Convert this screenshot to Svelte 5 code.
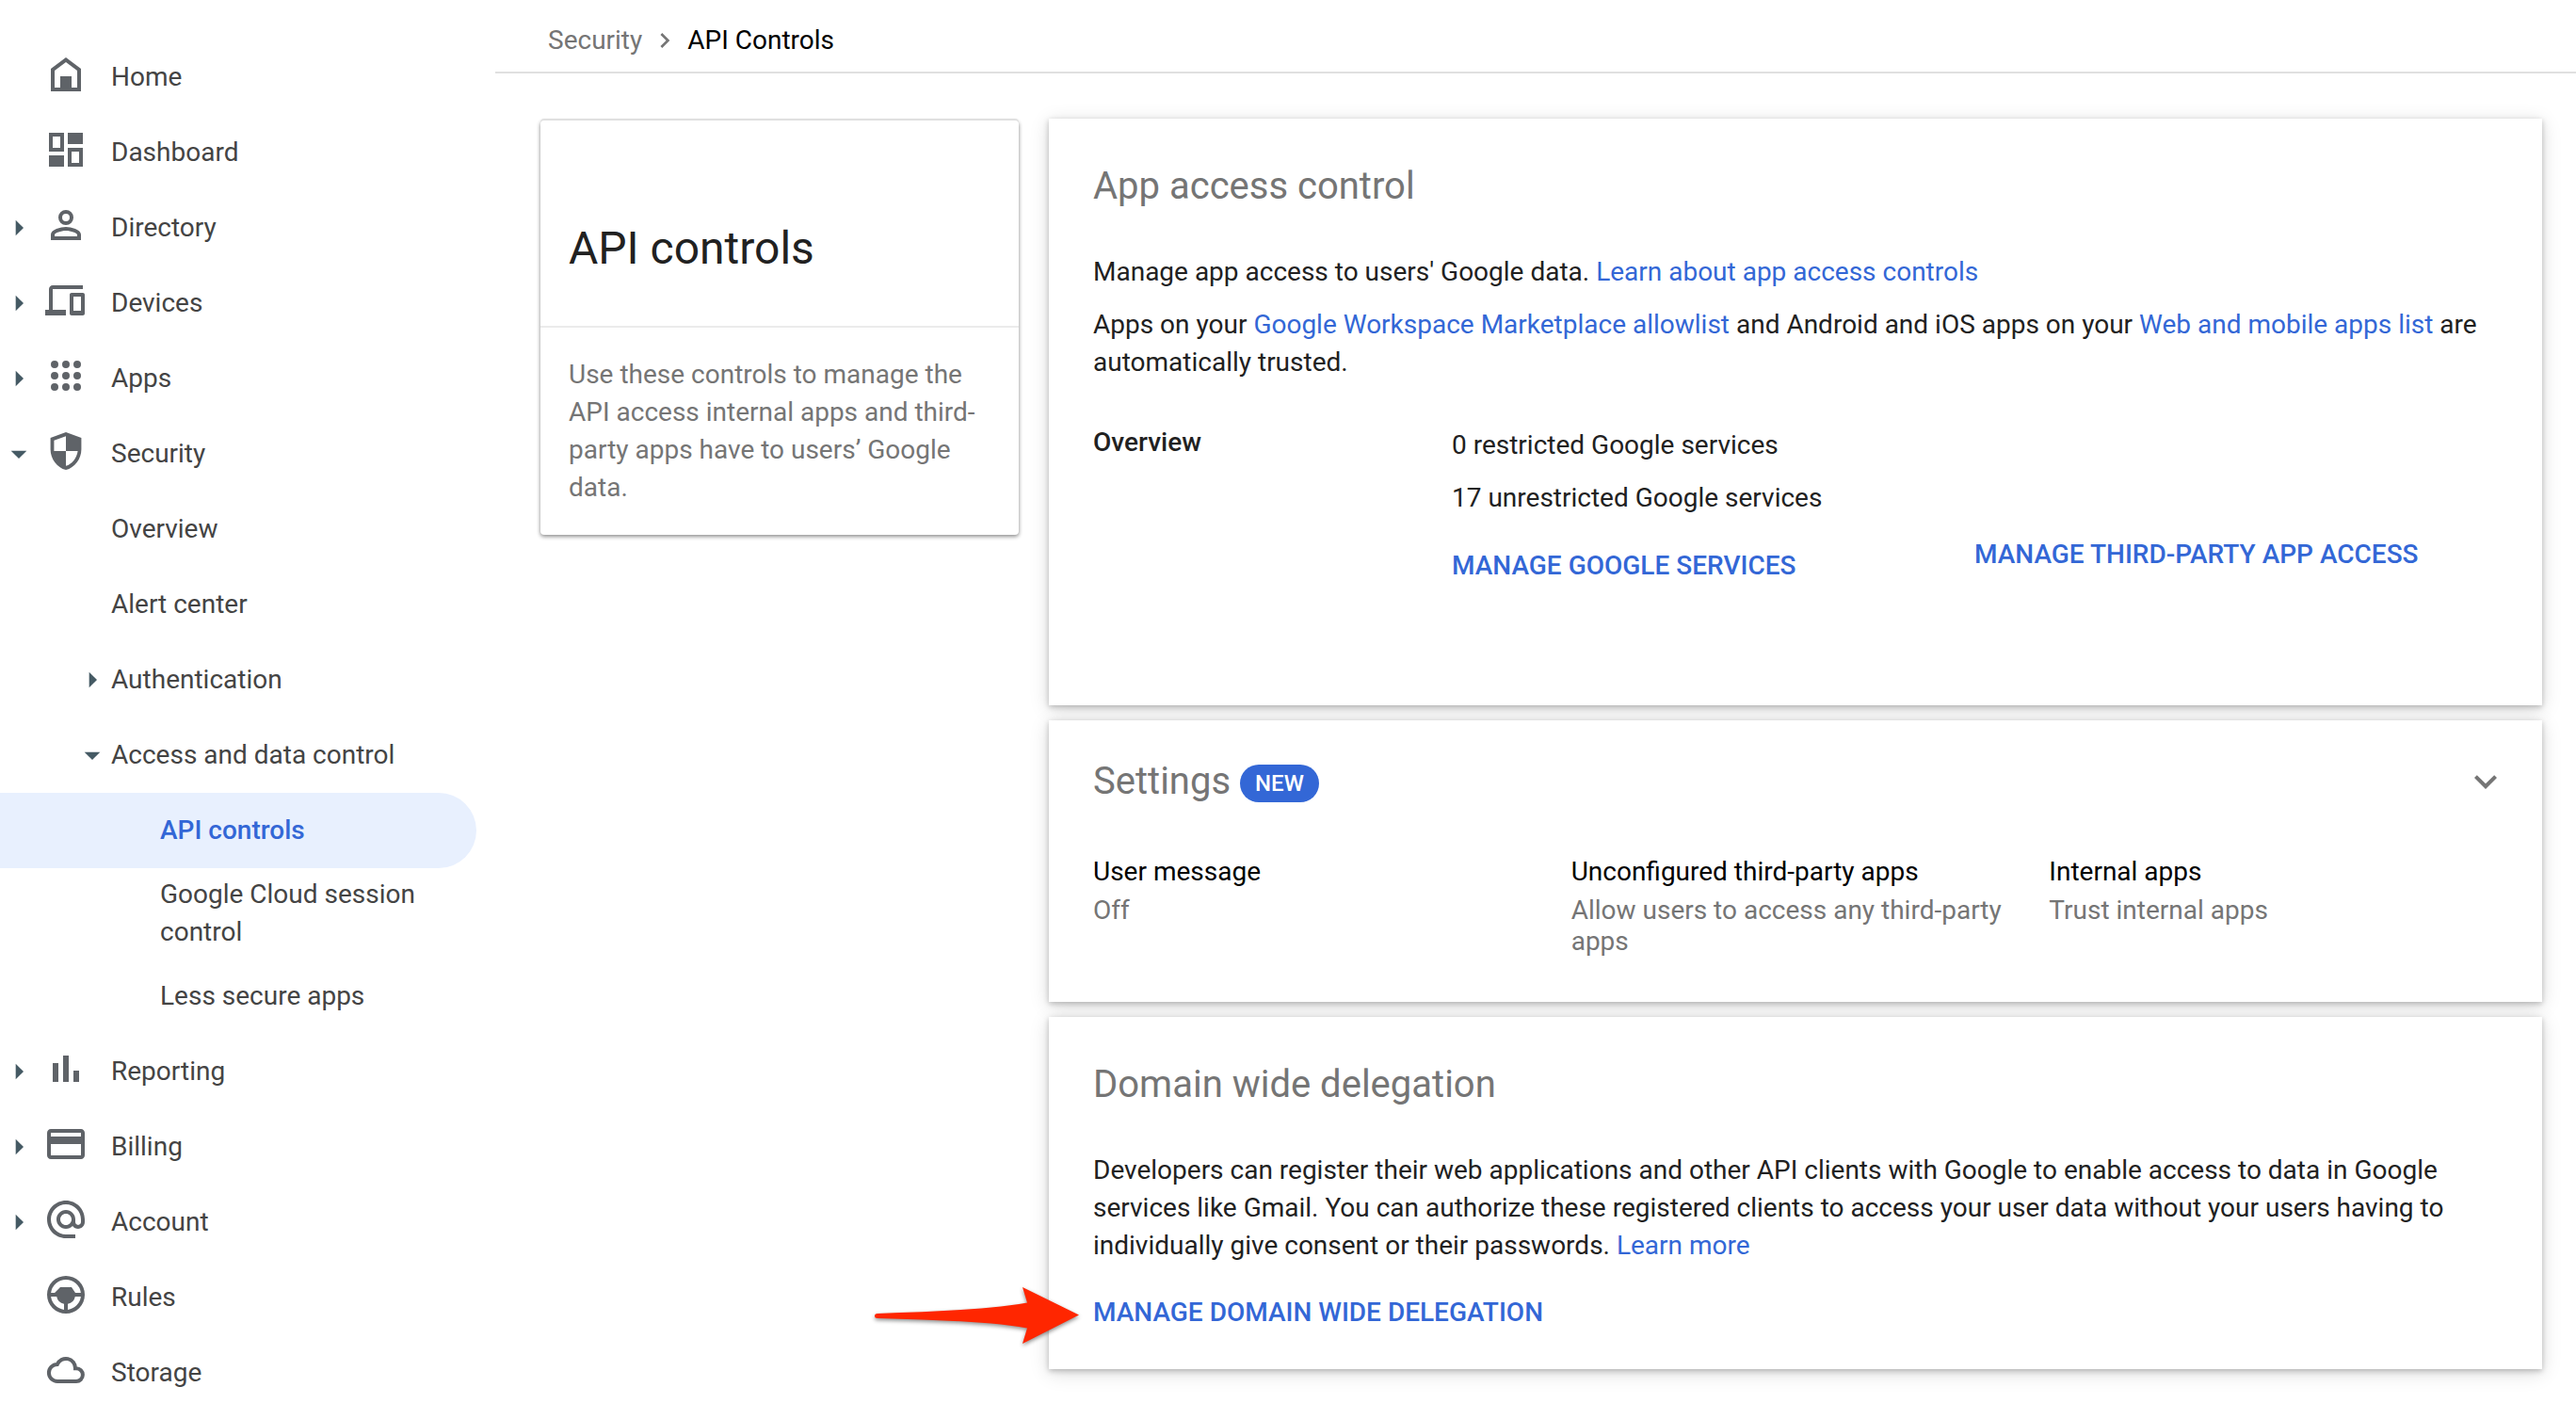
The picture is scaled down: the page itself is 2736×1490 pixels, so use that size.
<script>
  const nav = [
    { label: 'Home', icon: 'home' },
    { label: 'Dashboard', icon: 'dashboard' },
    { label: 'Directory', icon: 'person', state: 'closed' },
    { label: 'Devices', icon: 'devices', state: 'closed' },
    { label: 'Apps', icon: 'apps', state: 'closed' },
    {
      label: 'Security',
      icon: 'shield',
      state: 'open',
      children: [
        { label: 'Overview' },
        { label: 'Alert center' },
        { label: 'Authentication', state: 'closed' },
        {
          label: 'Access and data control',
          state: 'open',
          children: [
            { label: 'API controls', active: true },
            { label: 'Google Cloud session control' },
            { label: 'Less secure apps' }
          ]
        }
      ]
    },
    { label: 'Reporting', icon: 'bars', state: 'closed' },
    { label: 'Billing', icon: 'card', state: 'closed' },
    { label: 'Account', icon: 'at', state: 'closed' },
    { label: 'Rules', icon: 'wheel' },
    { label: 'Storage', icon: 'cloud' }
  ];

  const icons = {
    home: 'M12 3 4 9v12h16V9zM18 19h-3v-6H9v6H6v-9l6-4.5 6 4.5z',
    dashboard: 'M3 3h8v10H3zM5 5v6h4V5zM13 3h8v6h-8zM3 15h8v6H3zM13 11h8v10h-8zM15 13v6h4v-6z',
    person:
      'M12 6a2 2 0 1 1 0 4 2 2 0 0 1 0-4m0 9c2.7 0 5.8 1.29 6 2v1H6v-.99c.2-.72 3.3-2.01 6-2.01m0-11a4 4 0 1 0 0 8 4 4 0 0 0 0-8zm0 9c-2.67 0-8 1.34-8 4v3h16v-3c0-2.66-5.33-4-8-4z',
    devices:
      'M5 6h16V4H5c-1.1 0-2 .9-2 2v11H1v3h11v-3H5zM21 8h-6c-.55 0-1 .45-1 1v10c0 .55.45 1 1 1h6c.55 0 1-.45 1-1V9c0-.55-.45-1-1-1zM20 17.500h-4V10h4z',
    apps:
      'M6 4a2 2 0 1 0 0 4 2 2 0 0 0 0-4zm6 0a2 2 0 1 0 0 4 2 2 0 0 0 0-4zm6 0a2 2 0 1 0 0 4 2 2 0 0 0 0-4zM6 10a2 2 0 1 0 0 4 2 2 0 0 0 0-4zm6 0a2 2 0 1 0 0 4 2 2 0 0 0 0-4zm6 0a2 2 0 1 0 0 4 2 2 0 0 0 0-4zM6 16a2 2 0 1 0 0 4 2 2 0 0 0 0-4zm6 0a2 2 0 1 0 0 4 2 2 0 0 0 0-4zm6 0a2 2 0 1 0 0 4 2 2 0 0 0 0-4z',
    shield:
      'M12 2 3.800 5v6.090c0 5.050 3.500 9.760 8.200 10.910 4.700-1.150 8.200-5.860 8.200-10.910V5zM12 4.100V12h6.300c-.5 3.700-3 6.900-6.300 7.930V12H5.700V6.390z',
    bars: 'M5 9h3v10H5zM10.500 5h3v14h-3zM16 13h3v6h-3z',
    card:
      'M20 4H4c-1.110 0-1.990.890-1.990 2L2 18c0 1.110.890 2 2 2h16c1.110 0 2-.890 2-2V6c0-1.110-.890-2-2-2zm0 14H4v-6h16zm0-10H4V6h16z',
    at: 'M12 2C6.480 2 2 6.480 2 12s4.480 10 10 10h5v-2h-5c-4.340 0-8-3.660-8-8s3.660-8 8-8 8 3.660 8 8v1.430c0 .790-.710 1.570-1.500 1.570s-1.500-.780-1.500-1.570V12c0-2.760-2.240-5-5-5s-5 2.240-5 5 2.240 5 5 5c1.380 0 2.640-.560 3.540-1.470.650.890 1.770 1.470 2.960 1.470 1.970 0 3.500-1.600 3.500-3.570V12c0-5.520-4.480-10-10-10zm0 13c-1.660 0-3-1.340-3-3s1.340-3 3-3 3 1.340 3 3-1.340 3-3 3z',
    wheel:
      'M12 2a10 10 0 1 0 0 20 10 10 0 0 0 0-20zm0 2a8 8 0 0 1 7.940 7H17l-2-3H9l-3 3H4.060A8 8 0 0 1 12 4zM4.060 13h3.040A5 5 0 0 0 11 16.900v3.040A8 8 0 0 1 4.060 13zM13 19.940V16.900A5 5 0 0 0 16.900 13h3.040A8 8 0 0 1 13 19.940z'
  };

  const settings = [
    { name: 'User message', value: 'Off' },
    { name: 'Unconfigured third-party apps', value: 'Allow users to access any third-party apps' },
    { name: 'Internal apps', value: 'Trust internal apps' }
  ];
</script>

{#snippet caret(state)}
  <svg class="caret" viewBox="0 0 24 24" aria-hidden="true">
    {#if state === 'closed'}
      <path d="M10 17l5-5-5-5z" />
    {:else if state === 'open'}
      <path d="M7 10l5 5 5-5z" />
    {/if}
  </svg>
{/snippet}

{#snippet items(list, depth)}
  <ul>
    {#each list as item}
      <li>
        <a
          href="#{item.label.toLowerCase().replaceAll(' ', '-')}"
          class="row depth-{depth}"
          class:active={item.active}
          aria-current={item.active ? 'page' : undefined}
        >
          {#if depth < 2}{@render caret(item.state)}{/if}
          {#if item.icon}
            <svg class="icon" viewBox="0 0 24 24" aria-hidden="true">
              {#if item.icon === 'cloud'}
                <path
                  class="outline"
                  d="M7.500 18a4.500 4.500 0 0 1-.1-9A5 5 0 0 1 17 11.100h.5a3.450 3.450 0 0 1 0 6.900z"
                />
              {:else}
                <path fill-rule="evenodd" d={icons[item.icon]} />
              {/if}
            </svg>
          {/if}
          <span>{item.label}</span>
        </a>
        {#if item.children}{@render items(item.children, depth + 1)}{/if}
      </li>
    {/each}
  </ul>
{/snippet}

<div class="shell">
  <nav class="sidebar" aria-label="Admin">
    {@render items(nav, 0)}
  </nav>

  <div class="page">
    <header class="crumbs">
      <a href="#security">Security</a>
      <svg viewBox="0 0 24 24" aria-hidden="true">
        <path d="M10 6 8.590 7.410 13.170 12l-4.580 4.590L10 18l6-6z" />
      </svg>
      <span>API Controls</span>
    </header>

    <main class="content">
      <aside class="intro">
        <h1>API controls</h1>
        <p>
          Use these controls to manage the API access internal apps and third-party apps have to
          users’ Google data.
        </p>
      </aside>

      <div class="cards">
        <section class="card access">
          <h2>App access control</h2>
          <p>
            Manage app access to users' Google data.
            <a href="#learn">Learn about app access controls</a>
          </p>
          <p>
            Apps on your <a href="#allowlist">Google Workspace Marketplace allowlist</a> and Android
            and iOS apps on your <a href="#apps-list">Web and mobile apps list</a> are automatically
            trusted.
          </p>
          <div class="overview">
            <h3>Overview</h3>
            <div class="services">
              <p>0 restricted Google services</p>
              <p>17 unrestricted Google services</p>
              <button type="button" class="action">MANAGE GOOGLE SERVICES</button>
            </div>
            <button type="button" class="action third">MANAGE THIRD-PARTY APP ACCESS</button>
          </div>
        </section>

        <section class="card settings">
          <div class="settings-head">
            <h2>Settings</h2>
            <span class="badge">NEW</span>
            <button type="button" class="expand" aria-label="Expand settings">
              <svg viewBox="0 0 24 24" aria-hidden="true">
                <path d="M16.590 8.590 12 13.170 7.410 8.590 6 10l6 6 6-6z" />
              </svg>
            </button>
          </div>
          <dl>
            {#each settings as s}
              <div>
                <dt>{s.name}</dt>
                <dd>{s.value}</dd>
              </div>
            {/each}
          </dl>
        </section>

        <section class="card delegation">
          <h2>Domain wide delegation</h2>
          <p>
            Developers can register their web applications and other API clients with Google to
            enable access to data in Google services like Gmail. You can authorize these registered
            clients to access your user data without your users having to individually give consent
            or their passwords. <a href="#learn-more">Learn more</a>
          </p>
          <div class="pointed">
            <button type="button" class="action">MANAGE DOMAIN WIDE DELEGATION</button>
            <svg class="pointer" viewBox="0 0 217 60" aria-hidden="true">
              <path
                d="M0 30.500Q0 28 3 28C60 26 120 24 162 16.500L157 0 217 29.500 157 60 162 43.500C120 36 60 35 3 33Q0 33 0 30.500Z"
              />
            </svg>
          </div>
        </section>
      </div>
    </main>
  </div>
</div>

<style>
  :global(body) {
    margin: 0;
    background: #fff;
  }

  .shell {
    display: flex;
    height: 100vh;
    font: 400 28px/40px Roboto, 'Liberation Sans', sans-serif;
    color: #212121;
  }

  h1,
  h2,
  h3,
  p,
  ul,
  dl,
  dd {
    margin: 0;
    padding: 0;
    font-weight: 400;
  }

  a {
    color: #3367d6;
    text-decoration: none;
  }

  svg {
    display: block;
    flex: none;
    fill: currentColor;
  }

  button {
    padding: 0;
    border: 0;
    background: none;
    font: inherit;
    cursor: pointer;
  }

  .sidebar {
    box-sizing: border-box;
    flex: 0 0 526px;
    padding: 42px 20px 0 0;
    overflow-y: auto;
    scrollbar-width: none;
  }

  .sidebar ul {
    list-style: none;
  }

  .row {
    display: flex;
    align-items: center;
    box-sizing: border-box;
    min-height: 80px;
    padding: 8px 40px 8px 0;
    border-radius: 0 40px 40px 0;
    color: #444;
  }

  .row.depth-1 {
    padding-left: 78px;
  }

  .row.depth-2 {
    padding-left: 170px;
  }

  .row.active {
    background: #e8f0fe;
    color: #3367d6;
    font-weight: 500;
  }

  .caret {
    width: 40px;
    height: 40px;
    color: #455a64;
  }

  .icon {
    width: 48px;
    height: 48px;
    margin: 0 24px 6px 6px;
    color: #5f6368;
  }

  .outline {
    fill: none;
    stroke: currentColor;
    stroke-width: 2;
  }

  .page {
    flex: 1;
    min-width: 0;
    overflow-y: auto;
    scrollbar-width: none;
  }

  .crumbs {
    display: flex;
    align-items: center;
    padding: 23px 56px 13px;
    border-bottom: 2px solid #e0e0e0;
    color: #000;
  }

  .crumbs a,
  .crumbs svg {
    color: #757575;
  }

  .crumbs svg {
    width: 32px;
    height: 32px;
    margin: 0 8px;
  }

  .content {
    display: flex;
    align-items: flex-start;
    gap: 32px;
    padding: 48px 36px 36px 48px;
  }

  .intro {
    flex: 0 0 508px;
    margin-top: 2px;
    border-radius: 4px;
    background: #fff;
    box-shadow:
      0 -2px 0 #e0e0e0,
      0 0 4px rgba(0, 0, 0, 0.12),
      0 2px 4px rgba(0, 0, 0, 0.4);
  }

  .intro h1 {
    padding: 104px 30px 50px;
    border-bottom: 2px solid #ebebeb;
    font-size: 48px;
    line-height: 64px;
  }

  .intro p {
    padding: 30px;
    color: #757575;
  }

  .cards {
    display: flex;
    flex: 1;
    flex-direction: column;
    gap: 16px;
    min-width: 0;
  }

  .card {
    padding: 48px 48px 40px 47px;
    background: #fff;
    box-shadow:
      0 2px 6px rgba(0, 0, 0, 0.24),
      0 4px 20px rgba(0, 0, 0, 0.14);
  }

  .card h2 {
    color: #757575;
    font-size: 40px;
    line-height: 48px;
  }

  .card h2 + p {
    margin-top: 47px;
  }

  .card p + p {
    margin-top: 16px;
  }

  .access {
    padding-bottom: 128px;
  }

  .overview {
    display: grid;
    grid-template-columns: 381fr 555fr 555fr;
    align-items: start;
    margin-top: 45px;
  }

  .overview h3 {
    font-size: 28px;
    font-weight: 500;
  }

  .services {
    padding-top: 3px;
  }

  .services .action {
    margin-top: 32px;
  }

  .action {
    display: block;
    color: #3367d6;
    font-weight: 500;
    text-align: left;
  }

  .third {
    margin-top: 119px;
  }

  .settings {
    padding: 41px 16px 48px 47px;
  }

  .settings-head {
    display: flex;
    align-items: center;
    margin-right: 20px;
  }

  .badge {
    margin: 4px 0 0 10px;
    padding: 0 16px;
    border-radius: 20px;
    background: #3367d6;
    color: #fff;
    font-size: 24px;
    font-weight: 500;
  }

  .expand {
    margin-left: auto;
    color: #757575;
  }

  .expand svg {
    width: 48px;
    height: 48px;
  }

  dl {
    display: grid;
    grid-template-columns: repeat(3, 1fr);
    margin-top: 52px;
  }

  dl div {
    padding-right: 32px;
  }

  dt {
    color: #000;
  }

  dd {
    margin-top: 4px;
    color: #757575;
    line-height: 33px;
  }

  .pointed {
    position: relative;
    width: fit-content;
    margin-top: 31px;
  }

  .pointer {
    position: absolute;
    top: -7px;
    right: calc(100% + 15px);
    width: 217px;
    height: 60px;
    overflow: visible;
    fill: #ff2600;
    filter: drop-shadow(0 2px 2px rgba(0, 0, 0, 0.45));
  }
</style>
